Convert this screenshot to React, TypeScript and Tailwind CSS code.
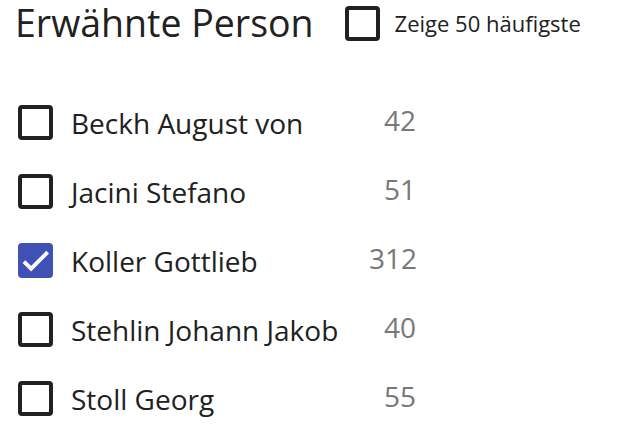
import { useState } from "react";

interface Person {
  name: string;
  count: number;
}

const people: Person[] = [
  { name: "Beckh August von", count: 42 },
  { name: "Jacini Stefano", count: 51 },
  { name: "Koller Gottlieb", count: 312 },
  { name: "Stehlin Johann Jakob", count: 40 },
  { name: "Stoll Georg", count: 55 },
];

const Box = ({ checked, onClick }: { checked: boolean; onClick: () => void }) => (
  <button
    onClick={onClick}
    className={
      checked
        ? "flex h-[35px] w-[35px] shrink-0 items-center justify-center rounded-[4px] bg-[#3f51b5]"
        : "flex h-[35px] w-[35px] shrink-0 items-center justify-center rounded-[4px] border-[4px] border-[#212121] bg-white"
    }
  >
    {checked && (
      <svg viewBox="0 0 24 24" className="h-[27px] w-[27px]">
        <path d="M1.73 12.91L8.1 19.28L22.79 4.59" fill="none" stroke="white" strokeWidth="3.4" />
      </svg>
    )}
  </button>
);

export default function App() {
  const [top50, setTop50] = useState(false);
  const [selected, setSelected] = useState<string[]>(["Koller Gottlieb"]);

  const toggle = (name: string) =>
    setSelected(s => (s.includes(name) ? s.filter(n => n !== name) : [...s, name]));

  return (
    <div className="h-[434px] w-[620px] bg-white font-['Open_Sans',sans-serif] text-[#212121]">
      <div className="flex items-center pl-[15px]">
        <h2 className="text-[37.5px] leading-[46px]">Erwähnte Person</h2>
        <div className="ml-[31px] flex items-center gap-[15px]">
          <Box checked={top50} onClick={() => setTop50(!top50)} />
          <span className="text-[22px]">Zeige 50 häufigste</span>
        </div>
      </div>

      {/* Personen-Liste */}
      <div className="mt-[59px] flex flex-col gap-[34px] pl-[18px]">
        {people.map(p => (
          <div key={p.name} className="flex h-[35px] items-center">
            <Box checked={selected.includes(p.name)} onClick={() => toggle(p.name)} />
            <span className="ml-[18px] w-[298px] text-[28px]">{p.name}</span>
            <span className="-mt-[6px] w-[47px] text-right text-[28px] text-[#787878]">{p.count}</span>
          </div>
        ))}
      </div>
    </div>
  );
}
